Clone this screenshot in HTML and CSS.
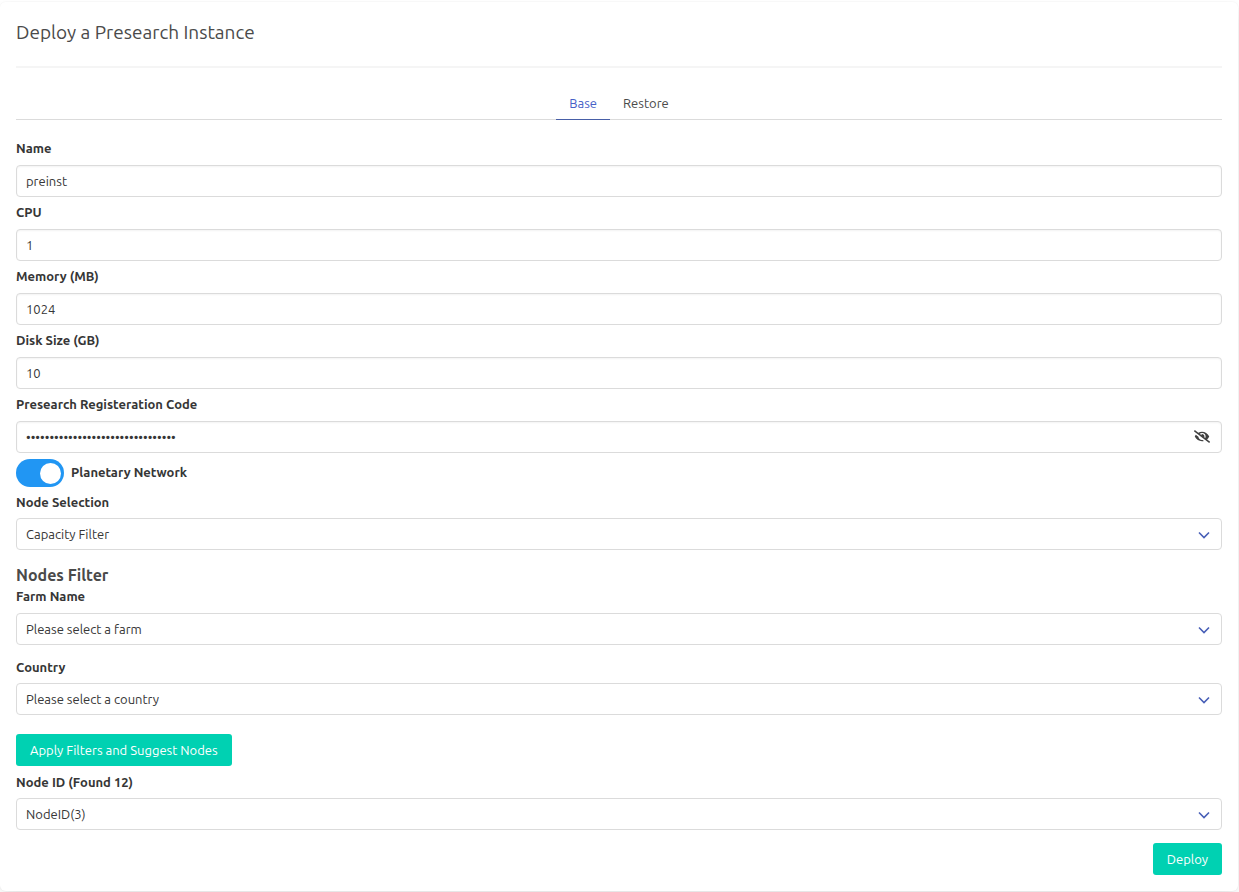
FILE: index.html
```html
<!DOCTYPE html>
<html lang="en">
<head>
<meta charset="utf-8">
<meta name="viewport" content="width=device-width, initial-scale=1">
<title>Deploy a Presearch Instance</title>
<link rel="stylesheet" href="styles.css">
</head>
<body>
<form class="box">
  <h4 class="title">Deploy a Presearch Instance</h4>
  <hr class="divider">
  <nav class="tabs">
    <a class="tab tab-active" href="#base">Base</a>
    <a class="tab" href="#restore">Restore</a>
  </nav>

  <div class="field">
    <label class="label" for="name">Name</label>
    <input class="control" id="name" type="text" value="preinst">
  </div>
  <div class="field">
    <label class="label" for="cpu">CPU</label>
    <input class="control" id="cpu" type="text" value="1">
  </div>
  <div class="field">
    <label class="label" for="memory">Memory (MB)</label>
    <input class="control" id="memory" type="text" value="1024">
  </div>
  <div class="field">
    <label class="label" for="disk">Disk Size (GB)</label>
    <input class="control" id="disk" type="text" value="10">
  </div>
  <div class="field">
    <label class="label" for="code">Presearch Registeration Code</label>
    <div class="wrap">
      <input class="control control-password" id="code" type="password" value="abcdefghijklmnopqrstuvwxyz012345">
      <button class="reveal" type="button" aria-label="Show code">
        <svg class="reveal-icon" viewBox="0 0 640 512"><path fill="currentColor" d="M320 400c-75.850 0-137.250-58.710-142.900-133.110L72.200 185.820c-13.790 17.300-26.480 35.590-36.720 55.590a32.350 32.350 0 0 0 0 29.190C89.710 376.410 197.070 448 320 448c26.910 0 52.870-4 77.890-10.460L346 397.390a144.130 144.130 0 0 1-26 2.610zm313.820 58.100l-110.550-85.440a331.250 331.250 0 0 0 81.250-102.070 32.350 32.350 0 0 0 0-29.190C550.290 135.590 442.930 64 320 64a308.150 308.150 0 0 0-147.320 37.700L45.460 3.370A16 16 0 0 0 23 6.180L3.370 31.450A16 16 0 0 0 6.180 53.900l588.360 454.730a16 16 0 0 0 22.460-2.810l19.640-25.270a16 16 0 0 0-2.820-22.450zm-183.720-142l-39.300-30.380A94.750 94.750 0 0 0 416 256a94.760 94.760 0 0 0-121.310-92.210A47.650 47.650 0 0 1 304 192a46.640 46.640 0 0 1-1.540 10l-73.610-56.890A142.310 142.310 0 0 1 320 112a143.920 143.920 0 0 1 144 144c0 21.630-5.290 41.790-13.900 60.110z"/></svg>
      </button>
    </div>
  </div>

  <label class="switch">
    <input class="switch-input" type="checkbox" role="switch" checked>
    <span class="switch-text">Planetary Network</span>
  </label>

  <div class="field field-select">
    <label class="label" for="selection">Node Selection</label>
    <div class="wrap">
      <select class="control" id="selection"><option>Capacity Filter</option><option>Manual</option></select>
      <svg class="chevron" viewBox="0 0 12 8"><path d="M1 1.500 6 6.500 11 1.500"/></svg>
    </div>
  </div>

  <h5 class="subtitle">Nodes Filter</h5>
  <div class="field field-first">
    <label class="label" for="farm">Farm Name</label>
    <div class="wrap">
      <select class="control" id="farm"><option>Please select a farm</option></select>
      <svg class="chevron" viewBox="0 0 12 8"><path d="M1 1.500 6 6.500 11 1.500"/></svg>
    </div>
  </div>
  <div class="field field-select field-spaced">
    <label class="label" for="country">Country</label>
    <div class="wrap">
      <select class="control" id="country"><option>Please select a country</option></select>
      <svg class="chevron" viewBox="0 0 12 8"><path d="M1 1.500 6 6.500 11 1.500"/></svg>
    </div>
  </div>
  <button class="button button-apply" type="button">Apply Filters and Suggest Nodes</button>
  <div class="field field-select">
    <label class="label" for="node">Node ID (Found 12)</label>
    <div class="wrap">
      <select class="control" id="node"><option>NodeID(3)</option></select>
      <svg class="chevron" viewBox="0 0 12 8"><path d="M1 1.500 6 6.500 11 1.500"/></svg>
    </div>
  </div>
  <div class="actions">
    <button class="button" type="submit">Deploy</button>
  </div>
</form>
</body>
</html>
```
FILE: styles.css
```css
* {
  box-sizing: border-box;
}

body {
  margin: 0;
  padding: 2px 1px 1px 0;
  background: #fff;
  color: #363636;
  font-family: Ubuntu, "Noto Sans", sans-serif;
  font-size: 13px;
  line-height: 20px;
}

.box {
  padding: 16px;
  border-radius: 6px;
  background: #fff;
  box-shadow: 0 8px 16px -2px rgba(10, 10, 10, 0.1), 0 0 0 1px rgba(10, 10, 10, 0.02);
}

.title {
  margin: 0;
  color: #4a4a4a;
  font-size: 19px;
  font-weight: 400;
  line-height: 28px;
}

.divider {
  height: 2px;
  margin: 20px 0;
  border: 0;
  background: #f5f5f5;
}

.tabs {
  display: flex;
  justify-content: center;
  height: 32px;
  margin-bottom: 18px;
  border-bottom: 1px solid #dbdbdb;
}

.tab {
  height: 32px;
  padding: 5px 13px;
  color: #4a4a4a;
  text-decoration: none;
}

.tab-active {
  border-bottom: 1px solid #485fa7;
  color: #485fc7;
}

.field {
  margin-top: 5px;
}

.label {
  display: block;
  margin-bottom: 7px;
  font-weight: 700;
}

.field-select .label {
  margin-bottom: 6px;
}

.field-first {
  margin-top: 0;
}

.field-spaced {
  margin-top: 12px;
}

.wrap {
  position: relative;
}

.control {
  display: block;
  width: 100%;
  height: 32px;
  margin: 0;
  padding: 0 9px;
  border: 1px solid #dbdbdb;
  border-radius: 4px;
  outline: 0;
  appearance: none;
  background: #fff;
  color: #363636;
  font: inherit;
}

input.control {
  box-shadow: inset 0 1px 2px rgba(10, 10, 10, 0.05);
}

.control-password {
  padding-right: 40px;
}

.reveal {
  position: absolute;
  top: 9px;
  right: 12px;
  display: flex;
  padding: 0;
  border: 0;
  background: none;
  color: #404040;
}

.reveal-icon {
  width: 16px;
  height: 13px;
}

.chevron {
  position: absolute;
  top: 13px;
  right: 12px;
  width: 12px;
  height: 8px;
  fill: none;
  stroke: #485fb7;
  stroke-width: 1.600;
  pointer-events: none;
}

.switch {
  display: flex;
  align-items: center;
  gap: 7px;
  margin-top: 6px;
  font-weight: 700;
}

.switch-input {
  display: flex;
  align-items: center;
  justify-content: flex-end;
  width: 48px;
  height: 28px;
  margin: 0;
  padding: 3px;
  border-radius: 14px;
  appearance: none;
  background: #2196f3;
}

.switch-input::before {
  width: 21px;
  height: 21px;
  border-radius: 50%;
  background: #fff;
  content: "";
}

.switch-text {
  padding-bottom: 2px;
}

.subtitle {
  margin: 14px 0 0;
  color: #4a4a4a;
  font-size: 16px;
  font-weight: 700;
  line-height: 22px;
}

.button {
  height: 32px;
  padding: 0 14px;
  border: 0;
  border-radius: 3px;
  background: #00d1b2;
  color: #fff;
  font: inherit;
}

.button-apply {
  display: block;
  margin: 19px 0 6px;
}

.actions {
  display: flex;
  justify-content: flex-end;
  margin-top: 13px;
}
```
